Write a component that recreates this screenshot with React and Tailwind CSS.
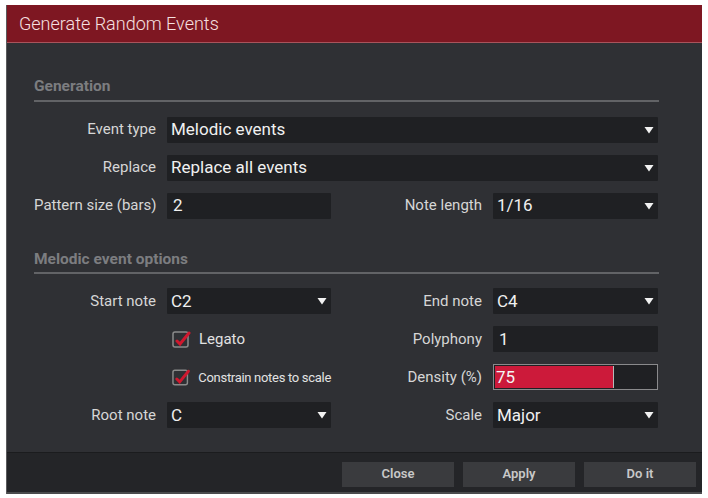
import React from "react";

const font = { fontFamily: "Roboto, 'Liberation Sans', sans-serif" };
const cols = "w-[625px] grid grid-cols-[122px_11px_164px_11px_140px_11px_165px] gap-y-[12px] auto-rows-[26px]";

function Arrow() {
  return (
    <svg width="10" height="8" viewBox="0 0 10 8" className="shrink-0">
      <polygon points="0.5,1 9.5,1 5,7.5" fill="#f2f2f2" />
    </svg>
  );
}

function Select({ value }) {
  return (
    <div className="h-[26px] bg-[#1f2023] flex items-center justify-between pl-[4px] pr-[4px] rounded-[1px]">
      <span className="text-[17px] text-[#f0f0f0] leading-none">{value}</span>
      <Arrow />
    </div>
  );
}

function Field({ value }) {
  return (
    <div className="h-[26px] bg-[#1f2023] flex items-center pl-[6px] rounded-[1px]">
      <span className="text-[17px] text-[#f0f0f0] leading-none">{value}</span>
    </div>
  );
}

function Label({ children }) {
  return (
    <div className="text-[15px] text-[#d6d6d6] text-right self-center leading-none whitespace-nowrap">
      {children}
    </div>
  );
}

function Check({ label, small }) {
  return (
    <div className="flex items-center gap-[8px] pl-[5px]">
      <svg width="19" height="19" viewBox="0 0 19 19">
        <rect x="1" y="2" width="15" height="15" rx="2" fill="none" stroke="#8a8a8a" strokeWidth="1.5" />
        <path d="M5 11 L8 14 L17 3" fill="none" stroke="#d0182e" strokeWidth="3" strokeLinecap="round" />
      </svg>
      <span className={(small ? "text-[13px] tracking-[-0.3px]" : "text-[15px]") + " text-[#e2e2e2] leading-none whitespace-nowrap"}>{label}</span>
    </div>
  );
}

function Section({ title, className }) {
  return (
    <div className={"w-[625px] " + className}>
      <div className="text-[15.5px] font-bold text-[#7c7d80] leading-none pb-[5px]">{title}</div>
      <div className="h-[2px] bg-[#626366]" />
    </div>
  );
}

export default function App() {
  return (
    <div className="w-[708px] h-[498px] bg-white pt-[5px] pl-[6px]" style={font}>
      <div className="w-[696px] h-[489px] flex flex-col bg-[#2f3034] border-l border-[#5a5a5c]">
        <div className="h-[38px] bg-[#7e1722] border-b border-[#a8545c] flex items-center pl-[12px]">
          <span className="text-[18px] text-[#f6e0e0] font-light">Generate Random Events</span>
        </div>

        <div className="flex-1 pl-[27px] pt-[36px]">
          <Section title="Generation" />

          <div className={cols + " mt-[15px]"}>
            <Label>Event type</Label>
            <div />
            <div className="col-span-5"><Select value="Melodic events" /></div>

            <Label>Replace</Label>
            <div />
            <div className="col-span-5"><Select value="Replace all events" /></div>

            <Label>Pattern size (bars)</Label>
            <div />
            <Field value="2" />
            <div />
            <Label>Note length</Label>
            <div />
            <Select value="1/16" />
          </div>

          <Section title="Melodic event options" className="mt-[33px]" />

          <div className={cols + " mt-[14px]"}>
            <Label>Start note</Label>
            <div />
            <Select value="C2" />
            <div />
            <Label>End note</Label>
            <div />
            <Select value="C4" />

            <div />
            <div />
            <Check label="Legato" />
            <div />
            <Label>Polyphony</Label>
            <div />
            <Field value="1" />

            <div />
            <div />
            <Check label="Constrain notes to scale" small />
            <div />
            <Label>Density (%)</Label>
            <div />
            <div className="h-[26px] bg-[#1f2023] border border-[#8a8a8c] p-[1px] flex">
              <div className="w-[118px] h-full bg-[#cc1a3a] flex items-center pl-[1px]">
                <span className="text-[17px] text-[#f4f4f4] leading-none">75</span>
              </div>
              <div className="w-[1px] h-full bg-[#b8b8b8]" />
            </div>

            <Label>Root note</Label>
            <div />
            <Select value="C" />
            <div />
            <Label>Scale</Label>
            <div />
            <Select value="Major" />
          </div>
        </div>

        <div className="h-[42px] bg-[#242528] border-t border-[#1b1c1e] border-b-2 border-b-[#4a4b4d] flex items-center justify-end gap-[9px] pr-[6px] pt-[3px]">
          {["Close", "Apply", "Do it"].map((b) => (
            <div
              key={b}
              className="w-[112px] h-[25px] bg-[#3a3b3e] flex items-center justify-center text-[13px] font-semibold text-[#c8c8c8]"
            >
              {b}
            </div>
          ))}
        </div>
      </div>
    </div>
  );
}
